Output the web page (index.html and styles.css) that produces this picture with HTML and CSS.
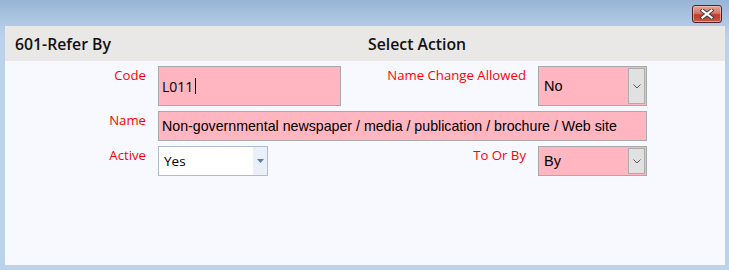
FILE: index.html
```html
<!DOCTYPE html>
<html>
<head>
<meta charset="utf-8">
<link rel="stylesheet" href="styles.css">
</head>
<body>
<div class="window">
  <div class="titlebar">
    <button class="close" aria-label="Close">
      <svg width="14" height="10" viewBox="0 0 14 10">
        <path d="M2.5 1.5 L11.5 8.5 M11.5 1.5 L2.5 8.5" stroke="#3a3a3a" stroke-width="4" stroke-linecap="square"/>
        <path d="M2.5 1.5 L11.5 8.5 M11.5 1.5 L2.5 8.5" stroke="#ffffff" stroke-width="2.2" stroke-linecap="square"/>
      </svg>
    </button>
  </div>
  <div class="client">
    <div class="header">
      <div class="htitle">601-Refer By</div>
      <div class="htitle">Select Action</div>
    </div>
    <div class="form">
      <label class="lbl">Code</label>
      <div class="input pink code"><span>L011</span><span class="caret"></span></div>
      <label class="lbl">Name Change Allowed</label>
      <div class="combo pink"><span class="val">No</span><span class="dd"><svg width="8" height="5" viewBox="0 0 8 5"><path d="M0.5 0.5 L4 4 L7.5 0.5" fill="none" stroke="#555" stroke-width="1"/></svg></span></div>

      <label class="lbl">Name</label>
      <div class="input pink name wide">Non-governmental newspaper / media / publication / brochure / Web site</div>

      <label class="lbl">Active</label>
      <div class="combo white"><span class="val">Yes</span><span class="ddw"><svg width="7" height="4" viewBox="0 0 7 4"><path d="M0 0 H7 L3.5 4 Z" fill="#5a7db0"/></svg></span></div>
      <label class="lbl">To Or By</label>
      <div class="combo pink"><span class="val">By</span><span class="dd"><svg width="8" height="5" viewBox="0 0 8 5"><path d="M0.5 0.5 L4 4 L7.5 0.5" fill="none" stroke="#555" stroke-width="1"/></svg></span></div>
    </div>
  </div>
</div>
</body>
</html>
```
FILE: styles.css
```css
html, body {
  margin: 0;
  padding: 0;
}
body {
  width: 729px;
  height: 270px;
  overflow: hidden;
}
.window {
  width: 729px;
  height: 270px;
  background: linear-gradient(to bottom, #98b4d6 0px, #b3cbe6 26px, #bad3eb 40px, #bad3eb 100%);
  display: flex;
  flex-direction: column;
}
.titlebar {
  height: 26px;
  display: flex;
  justify-content: flex-end;
  align-items: flex-start;
  padding-right: 7px;
  box-sizing: border-box;
}
.close {
  margin-top: 5px;
  width: 30px;
  height: 18px;
  padding: 0;
  border: 1px solid #4e2228;
  border-radius: 3px;
  background: linear-gradient(to bottom, #e4a394 0%, #d27a69 45%, #bd3d2c 55%, #c85a42 100%);
  box-shadow: inset 0 0 0 1px rgba(255, 210, 200, 0.55);
  display: flex;
  align-items: center;
  justify-content: center;
  box-sizing: border-box;
}
.client {
  margin-left: 5px;
  width: 720px;
  height: 239px;
  background: #f8f9fe;
}
.header {
  height: 35px;
  background: #eae7e7;
  display: grid;
  grid-template-columns: 353px auto;
  align-items: center;
  padding-left: 10px;
  box-sizing: border-box;
}
.htitle {
  font-family: "Open Sans", sans-serif;
  font-weight: 600;
  font-size: 15.8px;
  color: #111;
  padding-top: 1px;
}
.form {
  display: grid;
  grid-template-columns: 141px 183px 173px 109px;
  grid-template-rows: 40px 30px 30px;
  column-gap: 12px;
  row-gap: 5px;
  margin-top: 5px;
}
.lbl {
  text-align: right;
  font-family: "Open Sans", sans-serif;
  font-size: 13.2px;
  line-height: 18px;
  color: #ff0000;
  padding-top: 0px;
  white-space: nowrap;
}
.input, .combo {
  box-sizing: border-box;
  display: flex;
  align-items: center;
  color: #000;
}
.pink {
  background: #ffb6c1;
  border: 1px solid #a9a9a9;
}
.input {
  padding-left: 3px;
}
.code {
  font-family: "Open Sans", sans-serif;
  font-size: 14px;
}
.caret {
  display: inline-block;
  width: 1px;
  height: 16px;
  background: #000;
  margin-left: 2px;
}
.name {
  font-family: "Liberation Sans", Arial, sans-serif;
  font-size: 14.2px;
}
.wide {
  grid-column: 2 / 5;
}
.combo {
  justify-content: space-between;
  font-family: "Liberation Sans", Arial, sans-serif;
  font-size: 14.5px;
}
.combo .val {
  padding-left: 5px;
}
.dd {
  align-self: stretch;
  width: 17px;
  margin: 1px;
  background: #e1e1e1;
  border: 1px solid #acacac;
  box-sizing: border-box;
  display: flex;
  align-items: center;
  justify-content: center;
}
.white {
  background: #ffffff;
  border: 1px solid #abbcd6;
  width: 110px;
  font-family: "Open Sans", sans-serif;
  font-size: 13.5px;
}
.ddw {
  align-self: stretch;
  width: 14px;
  background: #e9f0fa;
  display: flex;
  align-items: center;
  justify-content: center;
}
```
